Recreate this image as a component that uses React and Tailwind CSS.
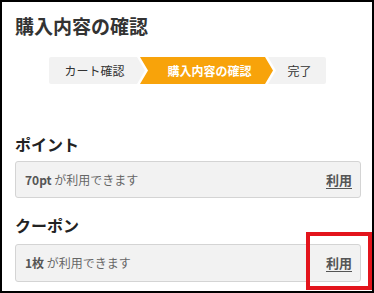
import React from "react";

const font = { fontFamily: '"Noto Sans CJK JP", "Noto Sans", sans-serif' };

function Stepper() {
  return (
    <div className="relative ml-[47px] mt-[19px] h-[27px] w-[277px]">
      <svg className="absolute inset-0" width="277" height="27" viewBox="0 0 277 27">
        <rect x="0" y="0" width="277" height="27" rx="2" fill="#f2f2f2" />
        <polygon points="94,0 219,0 227,13.5 219,27 94,27 102,13.5" fill="#ffffff" />
        <polygon points="88,0 213,0 221,13.5 213,27 88,27 96,13.5" fill="#ffffff" />
        <polygon points="91,0 216,0 224,13.5 216,27 91,27 99,13.5" fill="#f8a30a" />
      </svg>
      <div className="relative flex h-full items-center text-[12px] leading-none">
        <div className="w-[91px] text-center text-[#333]">カート確認</div>
        <div className="w-[133px] pl-[6px] text-center font-bold text-white">購入内容の確認</div>
        <div className="w-[53px] text-center text-[#333]">完了</div>
      </div>
    </div>
  );
}

function Box({ strong, h }) {
  return (
    <div
      className={`mr-[11px] flex items-center justify-between rounded-[3px] border border-[#d4d4d4] bg-[#f2f2f2] pl-[9px] pr-[8px] ${h}`}
    >
      <div className="text-[12px] text-[#666]">
        <span className="font-bold text-[#555]">{strong}</span> が利用できます
      </div>
      <div className="text-[13px] font-bold text-[#555] underline underline-offset-[3px]">利用</div>
    </div>
  );
}

export default function App() {
  return (
    <div
      style={font}
      className="relative h-[293px] w-[374px] overflow-hidden border-2 border-black bg-white pl-[13px] pt-[12px]"
    >
      <div className="text-[19px] font-bold leading-[24px] text-[#333]">購入内容の確認</div>
      <div className="-ml-[13px]">
        <Stepper />
      </div>
      <div className="mt-[50px] text-[16px] font-bold leading-[20px] text-[#222]">ポイント</div>
      <div className="mt-[7px]">
        <Box strong="70pt" h="h-[37px]" />
      </div>
      <div className="mt-[17px] text-[16px] font-bold leading-[20px] text-[#222]">クーポン</div>
      <div className="mt-[9px]">
        <Box strong="1枚" h="h-[38px]" />
      </div>
      <div className="absolute left-[304px] top-[230px] h-[58px] w-[66px] border-4 border-[#e3141c]" />
    </div>
  );
}
